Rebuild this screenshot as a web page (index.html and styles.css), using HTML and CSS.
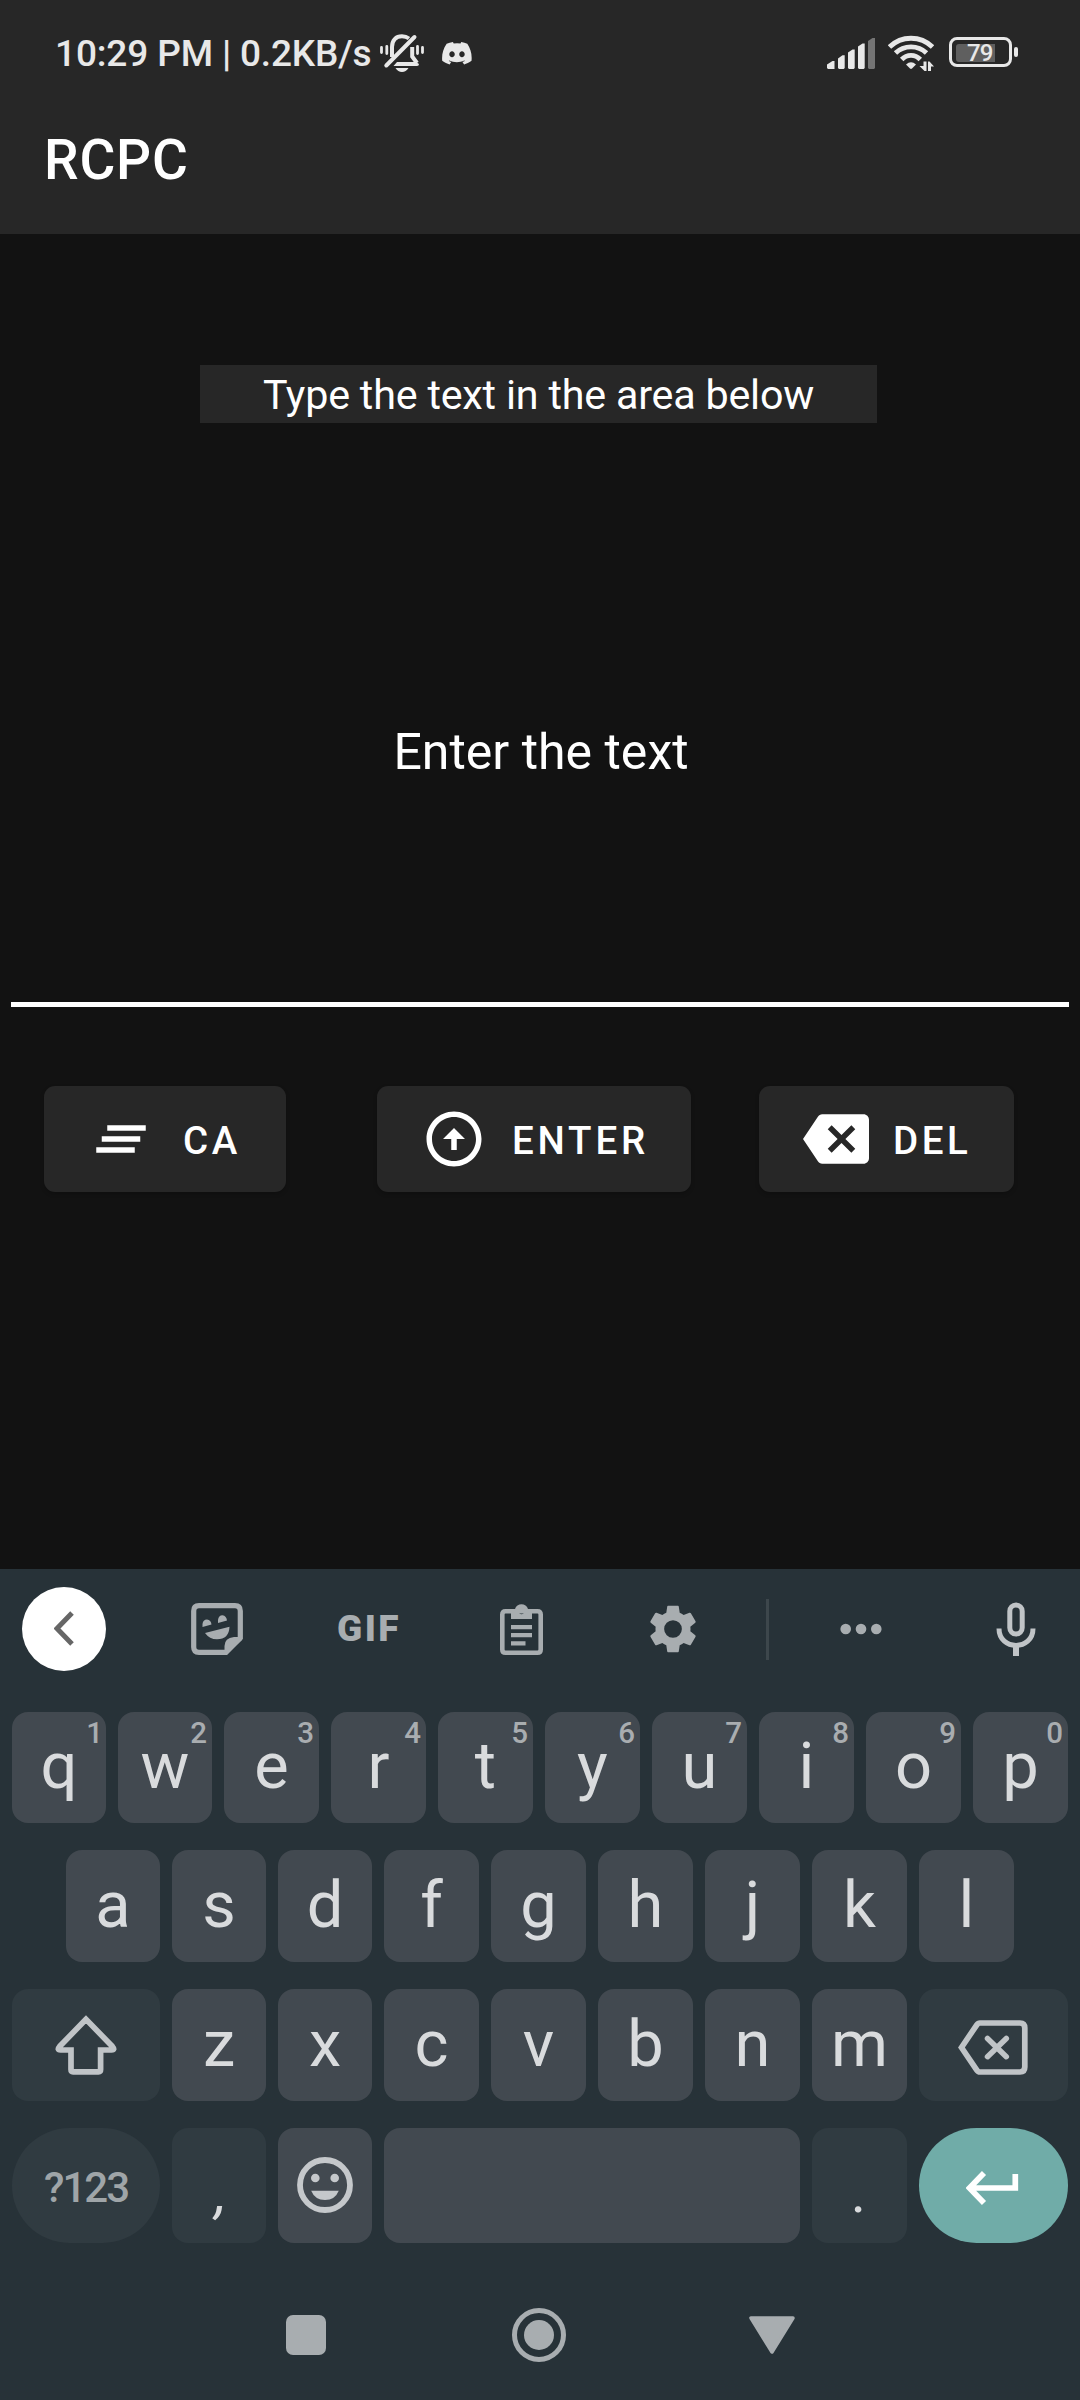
FILE: index.html
```html
<!DOCTYPE html>
<html lang="en">
<head>
<meta charset="utf-8">
<title>RCPC</title>
<link rel="stylesheet" href="styles.css">
</head>
<body>
<div class="screen">
  <header class="top">
    <div class="status">
      <span class="clock">10:29 PM | 0.2KB/s</span>
      <svg class="bell" width="44" height="40" viewBox="0 0 44 40">
        <g fill="none" stroke="#e8e8e8" stroke-linecap="round">
          <path d="M12 24V14C12 7 16 3.300 22 3.300C25 3.300 27 4 29 5.500" stroke-width="4" stroke-linecap="butt"/>
          <path d="M6.300 32.500L34.500 4" stroke-width="4"/>
          <path d="M32.200 14V23.500L37 30" stroke-width="4" stroke-linecap="butt"/>
          <path d="M1.500 14.500V19.500M6.800 13.500V20.500M37.500 13.500V20.500M42.500 14.500V19.500" stroke-width="2.800"/>
        </g>
        <path fill="#e8e8e8" d="M17 29H36L39 31Q39 33 37 33H13.500ZM15.500 35H28.500Q26 39 22 39Q18 39 15.500 35Z"/>
      </svg>
      <svg class="discord" width="30" height="23" viewBox="0 0 24 18.500">
        <path fill="#e8e8e8" fill-rule="evenodd" d="M20.317 1.500A19.800 19.800 0 0 0 15.432 0c-.2.400-.450.900-.6 1.250a18.300 18.300 0 0 0-5.487 0A12 12 0 0 0 8.700 0 19.700 19.700 0 0 0 3.677 1.500C.533 6.100-.320 10.600.100 15.100c2 1.500 4 2.400 6 3l1.200-2-1.900-.9.400-.300c3.900 1.800 8.200 1.800 12.100 0l.4.300-1.900.9 1.300 2c2-.6 4-1.500 6-3 .5-5.200-.8-9.700-3.400-13.600zM8 12.300c-1.200 0-2.200-1.100-2.200-2.400S6.800 7.500 8 7.500s2.200 1.100 2.200 2.400S9.200 12.300 8 12.300zM16 12.300c-1.200 0-2.200-1.100-2.200-2.400s1-2.400 2.200-2.400 2.200 1.100 2.200 2.400-1 2.400-2.200 2.400z"/>
      </svg>
      <svg class="signal" width="48" height="31" viewBox="0 0 48 31">
        <g fill="#e8e8e8">
          <path d="M0 26.500L5.500 23H7.500V31H1L0 30Z"/>
          <path d="M11 20.500L15.500 17.300H17.700V30L16.700 31H12L11 30Z"/>
          <path d="M21 14.500L25.500 11.500H27.700V30L26.700 31H22L21 30Z"/>
          <path d="M31 8.500L35.500 5.500H37.700V30L36.700 31H32L31 30Z"/>
          <path fill="#757575" d="M41 3L45.500 0H48V30L47 31H42L41 30Z"/>
        </g>
      </svg>
      <svg class="wifi" width="46" height="37" viewBox="0 0 46 37">
        <g fill="none" stroke="#e8e8e8" stroke-width="4.800">
          <path d="M1.500 12C13.500 .3 32.500 .3 44.500 12"/>
          <path d="M7.500 18C16 9.700 30 9.700 38.500 18"/>
          <path d="M13.700 24.500C19 19 27 19 32.300 24.500"/>
        </g>
        <path fill="#e8e8e8" d="M18 29.500Q23 24.800 28 29.500L24 33.500Q23 34.300 22 33.500ZM35.500 26.500H38.500V36H36.500L31.500 31H35.500ZM40 36V26.500H41.500L46 31.500H43V36Z"/>
      </svg>
      <div class="battery"><div class="cell"><span class="level"></span><span class="pct">79</span></div><span class="nub"></span></div>
    </div>
    <h1 class="title">RCPC</h1>
  </header>

  <main class="content">
    <p class="label">Type the text in the area below</p>
    <div class="field">Enter the text</div>
    <div class="actions">
      <button class="btn ca"><svg width="66" height="66" viewBox="0 0 24 24"><path d="M5 13h14v-2H5v2zm-2 4h14v-2H3v2zM7 7v2h14V7H7z"/></svg><span>CA</span></button>
      <button class="btn enter"><svg width="66" height="66" viewBox="0 0 24 24"><path d="M12 20c-4.410 0-8-3.590-8-8s3.590-8 8-8 8 3.590 8 8-3.590 8-8 8m0 2c5.520 0 10-4.480 10-10S17.520 2 12 2 2 6.480 2 12s4.480 10 10 10zm-1-10v4h2v-4h3l-4-4-4 4h3z"/></svg><span>ENTER</span></button>
      <button class="btn del"><svg width="66" height="66" viewBox="0 0 24 24"><path d="M22 3H7c-.69 0-1.230.35-1.590.88L0 12l5.410 8.110c.36.53.9.89 1.590.89h15c1.100 0 2-.9 2-2V5c0-1.100-.9-2-2-2zm-3 12.590L17.590 17 14 13.410 10.410 17 9 15.590 12.590 12 9 8.410 10.410 7 14 10.590 17.590 7 19 8.410 15.410 12 19 15.590z"/></svg><span>DEL</span></button>
    </div>
  </main>

  <section class="keyboard">
    <div class="tools">
      <div class="back"><span class="disc"><svg width="20" height="35" viewBox="0 0 20 35"><path d="M18 2L3 17.500L18 33" fill="none" stroke="#666" stroke-width="5"/></svg></span></div>
      <div class="tool">
        <svg width="52" height="52" viewBox="0 0 52 52">
          <path d="M8 2.700H44Q49.300 2.700 49.300 8V35L35 49.300H8Q2.700 49.300 2.700 44V8Q2.700 2.700 8 2.700Z" fill="none" stroke="#a8adb0" stroke-width="5.200"/>
          <path fill="#a8adb0" d="M51 34H43Q33.500 35 33.500 43V51H36L51 37ZM11.500 24V21Q12 16.500 16 16.500Q20 17 20.500 21.500ZM27 20V17Q27.500 12.300 31.500 12.300Q35.500 13 36 17.500ZM14 30L38.500 23.800Q38 36.300 26 36.300Q18.500 36.300 14 30Z"/>
        </svg>
      </div>
      <div class="tool"><span class="gif">GIF</span></div>
      <div class="tool">
        <svg width="43" height="51" viewBox="0 0 43 51">
          <path d="M5.500 7.200H37.500Q40.700 7.200 40.700 10.500V45.500Q40.700 48.700 37.500 48.700H5.500Q2.300 48.700 2.300 45.500V10.500Q2.300 7.200 5.500 7.200Z" fill="none" stroke="#a8adb0" stroke-width="4.600"/>
          <path fill="#a8adb0" fill-rule="evenodd" d="M11 5H15C16.500 -1.500 26.500 -1.500 28 5H32V15H11ZM21.500 5A2.600 2.600 0 1 0 21.500 10.200A2.600 2.600 0 1 0 21.500 5ZM11 21H32V25.200H11ZM11 29H32V33.200H11ZM11 37.300H25.500V41.500H11Z"/>
        </svg>
      </div>
      <div class="tool">
        <svg width="56" height="56" viewBox="0 0 24 24"><path fill="#a8adb0" d="M19.500 12c0-.34-.03-.67-.07-1l2.110-1.630c.19-.15.24-.42.12-.64l-2-3.460c-.12-.22-.39-.3-.61-.22l-2.490 1c-.52-.4-1.080-.73-1.690-.98l-.38-2.650C14.460 2.180 14.250 2 14 2h-4c-.25 0-.46.18-.49.42l-.38 2.650c-.61.25-1.170.59-1.690.98l-2.490-1c-.23-.09-.49 0-.61.22l-2 3.460c-.13.22-.07.49.12.64L4.570 11c-.04.33-.07.66-.07 1s.03.67.07 1l-2.110 1.630c-.19.15-.24.42-.12.64l2 3.460c.12.22.39.3.61.22l2.490-1c.52.4 1.080.73 1.690.98l.38 2.650c.03.24.24.42.49.42h4c.25 0 .46-.18.49-.42l.38-2.650c.61-.25 1.170-.59 1.690-.98l2.490 1c.23.09.49 0 .61-.22l2-3.460c.12-.22.07-.49-.12-.64L19.430 13c.04-.33.07-.66.07-1zM12 15.800a3.800 3.800 0 1 1 0-7.600 3.800 3.800 0 0 1 0 7.600z"/></svg>
      </div>
      <span class="divider"></span>
      <div class="tool more">
        <svg width="42" height="12" viewBox="0 0 42 12"><g fill="#a8adb0"><circle cx="5.700" cy="6" r="5.300"/><circle cx="21" cy="6" r="5.300"/><circle cx="36.300" cy="6" r="5.300"/></g></svg>
      </div>
      <div class="tool mic">
        <svg width="40" height="54" viewBox="0 0 40 54"><g fill="none" stroke="#c0c4c7"><rect x="13.800" y="3" width="12.400" height="29" rx="6.200" stroke-width="5"/><path d="M3 26.500C3 49 37 49 37 26.500" stroke-width="5"/><path d="M20 43V54" stroke-width="6"/></g></svg>
      </div>
    </div>

    <div class="rows">
      <div class="row r1">
        <div class="key slim">q<sup>1</sup></div><div class="key slim">w<sup>2</sup></div><div class="key">e<sup>3</sup></div><div class="key">r<sup>4</sup></div><div class="key">t<sup>5</sup></div><div class="key">y<sup>6</sup></div><div class="key">u<sup>7</sup></div><div class="key">i<sup>8</sup></div><div class="key">o<sup>9</sup></div><div class="key">p<sup>0</sup></div>
      </div>
      <div class="row r2">
        <div class="key slim">a</div><div class="key slim">s</div><div class="key slim">d</div><div class="key">f</div><div class="key">g</div><div class="key">h</div><div class="key">j</div><div class="key">k</div><div class="key">l</div>
      </div>
      <div class="row r3">
        <div class="key wide dark"><svg width="62" height="60" viewBox="0 0 62 60"><path d="M31 4.300L4.600 31.500Q1.600 35 5.500 35H16V54.500Q16 56.800 18 56.800H43.500Q45.600 56.800 45.600 54.500V35H56.500Q60.400 35 57.400 31.500Z" fill="none" stroke="#c0c4c7" stroke-width="5.700"/></svg></div>
        <div class="key slim">z</div><div class="key slim">x</div><div class="key">c</div><div class="key">v</div><div class="key">b</div><div class="key">n</div><div class="key">m</div>
        <div class="key wide dark erase"><svg width="70" height="55" viewBox="0 0 70 55"><path d="M22 3H62Q66.800 3 66.800 8V47Q66.800 52 62 52H22Q20 52 18.800 50.200L3.500 27.500L18.800 4.800Q20 3 22 3Z" fill="none" stroke="#c0c4c7" stroke-width="5.700"/><path d="M29.500 18.500L48.300 36.700M48.300 18.500L29.500 36.700" stroke="#c0c4c7" stroke-width="5.500" stroke-linecap="round"/></svg></div>
      </div>
      <div class="row r4">
        <div class="key wide dark pill sym">?123</div>
        <div class="key slim dark punct comma">,</div>
        <div class="key slim emoji"><svg width="56" height="56" viewBox="0 0 56 56"><circle cx="28" cy="28" r="25" fill="none" stroke="#c5c8cb" stroke-width="5.800"/><g fill="#c5c8cb"><circle cx="18.300" cy="21" r="4.300"/><circle cx="37.700" cy="21" r="4.300"/><path d="M14.200 33.700H41.800Q38 43 28 43Q18 43 14.200 33.700Z"/></g></svg></div>
        <div class="key space"></div>
        <div class="key dark punct">.</div>
        <div class="key wide pill go"><svg width="53" height="34" viewBox="0 0 53 34"><path d="M49.300 3V17H5M18 2L3.500 17L18 32" fill="none" stroke="#fff" stroke-width="5.700"/></svg></div>
      </div>
    </div>

    <nav class="nav">
      <span class="recent"></span>
      <span class="home"><i></i></span>
      <svg width="46" height="38" viewBox="0 0 46 38"><path d="M2 2H44L23 36Z" fill="#a8adb0" stroke="#a8adb0" stroke-width="3.500" stroke-linejoin="round"/></svg>
    </nav>
  </section>
</div>
</body>
</html>
```
FILE: styles.css
```css
* { box-sizing: border-box; }
body { margin: 0; background: #121212; font-family: Roboto, "Liberation Sans", sans-serif; color: #fff; }
svg { display: block; flex: none; }
.screen { width: 1080px; height: 2400px; display: flex; flex-direction: column; overflow: hidden; }

.top { height: 234px; background: #272727; }
.status { height: 106px; padding: 0 62px 0 55px; display: flex; align-items: center; color: #e8e8e8; }
.clock { width: 325px; font-size: 37px; font-weight: 500; line-height: 106px; letter-spacing: -.15px; padding-top: 1px; white-space: nowrap; }
.discord { margin-left: 18px; }
.signal { margin-left: 355px; }
.wifi { margin-left: 13px; }
.battery { margin-left: 15px; margin-top: -2px; display: flex; align-items: center; gap: 2px; }
.cell { width: 63px; height: 30px; border: 3px solid #e8e8e8; border-radius: 8px; display: grid; align-items: center; padding: 0 4px; }
.level, .pct { grid-area: 1 / 1; }
.level { width: 39px; height: 18px; background: #5f5f5f; border-radius: 3px 0 0 3px; }
.pct { font-size: 24px; font-weight: 500; line-height: 24px; letter-spacing: -.8px; padding-left: 11px; padding-top: 1px; }
.nub { width: 4px; height: 10px; border-radius: 2px; background: #e8e8e8; }
.title { margin: 0; padding-left: 44px; font-size: 55px; font-weight: 500; line-height: 108px; letter-spacing: .8px; }

.content { height: 1335px; padding-top: 131px; }
.label { margin: 0 0 0 200px; width: 677px; height: 58px; padding-top: 1px; background: #272727; font-size: 41.250px; letter-spacing: -.2px; line-height: 58px; text-align: center; white-space: nowrap; }
.field { margin: 78px 11px 0; height: 506px; padding: 211px 0 0 2px; border-bottom: 5px solid #fff; font-size: 50px; line-height: 80px; text-align: center; }
.actions { display: flex; margin-top: 79px; padding-left: 44px; }
.btn { height: 106px; border: 0; padding: 0; border-radius: 11px; background: #272727; color: #fff; display: flex; align-items: center; font: 500 38.500px/106px Roboto, sans-serif; letter-spacing: 3.500px; box-shadow: 0 2px 4px rgba(0, 0, 0, .2); }
.btn svg { fill: #fff; }
.btn span { padding-top: 3px; line-height: 103px; }
.ca { width: 242px; padding-left: 44px; gap: 29px; }
.enter { width: 314px; margin-left: 91px; padding-left: 44px; gap: 25px; letter-spacing: 3.800px; }
.del { width: 255px; margin-left: 68px; padding-left: 44px; gap: 24px; }

.keyboard { height: 831px; background: #273238; }
.tools { height: 143px; padding-bottom: 23px; display: flex; align-items: center; }
.back { width: 141px; padding-left: 22px; }
.disc { width: 84px; height: 84px; margin-top: -1px; border-radius: 42px; background: #fff; display: flex; align-items: center; justify-content: center; }
.tool { width: 152px; display: flex; justify-content: center; }
.gif { color: #a8adb0; font-size: 37px; font-weight: 900; line-height: 40px; letter-spacing: 2.500px; }
.divider { width: 3px; height: 61px; margin-left: 17px; background: #3d474c; }
.more { width: 184px; }
.mic { width: 126px; }

.rows { display: flex; flex-direction: column; gap: 27px; padding: 0 12px; }
.row { display: flex; gap: 12px; height: 112px; }
.r1 { height: 111px; }
.r2 { padding: 0 54px; }
.r4 { height: 115px; }
.key { position: relative; flex: 1 1 95px; border-radius: 16px; background: #424950; color: #d9dbdd; display: flex; align-items: center; justify-content: center; font-size: 65px; line-height: 80px; padding-bottom: 3px; }
.slim { flex: 0 0 94px; }
.key sup { position: absolute; top: 6px; right: 5px; font-size: 29.500px; line-height: 30px; font-weight: 500; color: #a9adb0; }
.r1 .key:first-child sup { right: 3px; }
.wide { flex: 0 0 148px; }
.wide:last-child { flex-basis: 149px; }
.dark { background: #303b41; }
.pill { border-radius: 58px; }
.r3 .wide { padding-bottom: 1px; }
.r3 .erase { padding: 4px 2px 0 0; }
.sym { font-size: 42px; font-weight: 500; letter-spacing: -2px; color: #9fa5a8; padding: 4px 0 0; }
.punct { font-size: 58px; padding: 12px 0 0; }
.punct:not(.slim) { flex: 0 0 95px; padding-right: 2px; }
.comma { font-style: italic; padding-left: 4px; }
.emoji { padding-bottom: 1px; }
.go { background: #70aca8; padding: 4px 2px 0 0; }

.nav { display: flex; align-items: center; padding: 65px 0 0 286px; }
.recent { width: 40px; height: 40px; border-radius: 7px; background: #a8adb0; }
.home { width: 54px; height: 54px; margin-left: 186px; border: 5px solid #a8adb0; border-radius: 50%; display: flex; align-items: center; justify-content: center; }
.home i { width: 30px; height: 30px; border-radius: 50%; background: #a8adb0; }
.nav svg { margin-left: 183px; }
```
